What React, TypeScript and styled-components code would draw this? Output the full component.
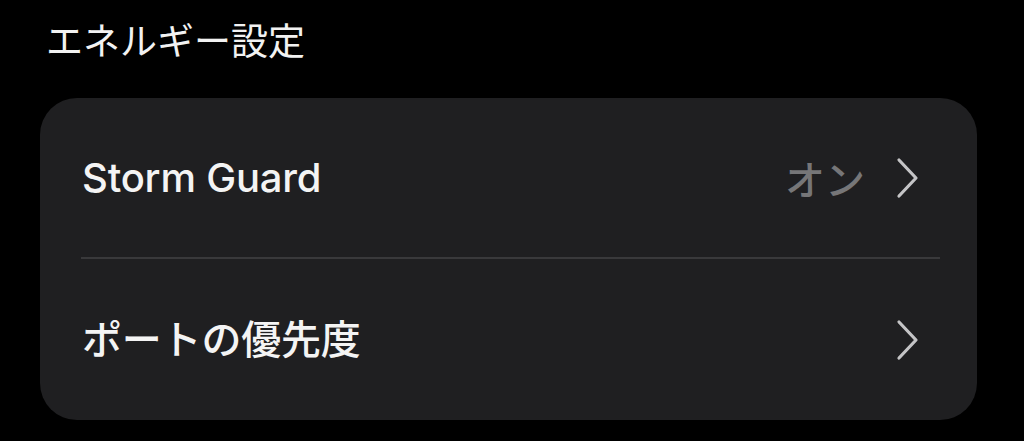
import React from "react";
import styled, { createGlobalStyle } from "styled-components";

const GlobalStyle = createGlobalStyle`
  html, body {
    margin: 0;
    padding: 0;
    background: #000000;
  }
  body {
    font-family: Inter, "Noto Sans CJK JP", sans-serif;
    -webkit-font-smoothing: antialiased;
  }
`;

const Page = styled.div`
  display: flex;
  flex-direction: column;
  width: 1024px;
  height: 441px;
  box-sizing: border-box;
  padding: 23px 47px 0 40px;
  background: #000000;
  overflow: hidden;
`;

const Title = styled.h2`
  margin: 0 0 38px 0;
  padding-left: 6px;
  font-family: Inter, "Noto Sans CJK JP", sans-serif;
  font-size: 37px;
  line-height: 37px;
  font-weight: 400;
  color: #f2f2f2;
`;

const Card = styled.div`
  display: flex;
  flex-direction: column;
  background: #1f1f21;
  border-radius: 37px;
  overflow: hidden;
`;

const Row = styled.div<{ $h: number }>`
  display: flex;
  align-items: center;
  justify-content: space-between;
  height: ${(p) => p.$h}px;
  padding: 0 58px 0 42px;
`;

const Label = styled.span`
  font-family: Inter, "Noto Sans CJK JP", sans-serif;
  font-size: 40px;
  line-height: 1;
  font-weight: 500;
  color: #f4f4f4;
  letter-spacing: -0.2px;
`;

const Trailing = styled.div`
  display: flex;
  align-items: center;
  gap: 30px;
`;

const Value = styled.span`
  font-family: "Noto Sans CJK JP", sans-serif;
  font-size: 40px;
  line-height: 1;
  font-weight: 500;
  color: #767678;
`;

const Divider = styled.div`
  height: 2px;
  margin: 0 37px 0 41px;
  background: #39393b;
`;

const Chevron = () => (
  <svg width="24" height="42" viewBox="0 0 24 42" fill="none">
    <path
      d="M4 3 L21 21 L4 39"
      stroke="#c4c4c6"
      strokeWidth="3.2"
      strokeLinecap="round"
      strokeLinejoin="round"
    />
  </svg>
);

export default function App() {
  return (
    <>
      <GlobalStyle />
      <Page>
        <Title>エネルギー設定</Title>
        <Card>
          <Row $h={159}>
            <Label>Storm Guard</Label>
            <Trailing>
              <Value>オン</Value>
              <Chevron />
            </Trailing>
          </Row>
          <Divider />
          <Row $h={161}>
            <Label>ポートの優先度</Label>
            <Trailing>
              <Chevron />
            </Trailing>
          </Row>
        </Card>
      </Page>
    </>
  );
}
